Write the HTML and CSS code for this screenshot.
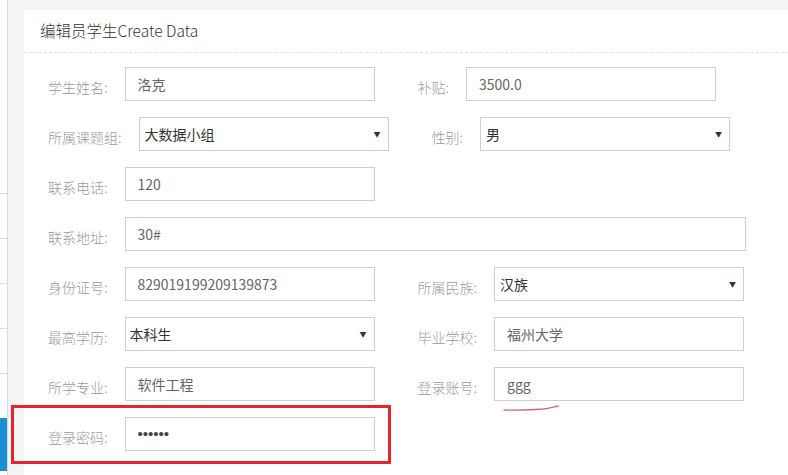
FILE: index.html
```html
<!DOCTYPE html>
<html lang="zh-CN">
<head>
<meta charset="utf-8">
<title>编辑员学生</title>
<link rel="stylesheet" href="styles.css">
</head>
<body>
<div class="page">
  <aside class="sidebar">
    <div class="side-top"></div>
    <div class="side-item"></div>
    <div class="side-item"></div>
    <div class="side-item"></div>
    <div class="side-item"></div>
    <div class="side-item"></div>
    <div class="side-item active"></div>
  </aside>
  <main class="panel">
    <div class="panel-head">编辑员学生Create Data</div>
    <form class="form">
      <div class="row">
        <div class="group"><span class="label">学生姓名:</span><div class="field">洛克</div></div>
        <div class="group"><span class="label">补贴:</span><div class="field">3500.0</div></div>
      </div>
      <div class="row">
        <div class="group"><span class="label">所属课题组:</span><div class="field select">大数据小组<span class="arrow">▼</span></div></div>
        <div class="group"><span class="label">性别:</span><div class="field select">男<span class="arrow">▼</span></div></div>
      </div>
      <div class="row">
        <div class="group"><span class="label">联系电话:</span><div class="field">120</div></div>
      </div>
      <div class="row">
        <div class="group"><span class="label">联系地址:</span><div class="field wide">30#</div></div>
      </div>
      <div class="row">
        <div class="group"><span class="label">身份证号:</span><div class="field">829019199209139873</div></div>
        <div class="group"><span class="label">所属民族:</span><div class="field select">汉族<span class="arrow">▼</span></div></div>
      </div>
      <div class="row">
        <div class="group"><span class="label">最高学历:</span><div class="field select tight">本科生<span class="arrow">▼</span></div></div>
        <div class="group"><span class="label">毕业学校:</span><div class="field">福州大学</div></div>
      </div>
      <div class="row">
        <div class="group"><span class="label">所学专业:</span><div class="field">软件工程</div></div>
        <div class="group"><span class="label">登录账号:</span><div class="field">ggg</div></div>
      </div>
      <div class="row">
        <div class="group"><span class="label">登录密码:</span><div class="field pwd">••••••</div></div>
      </div>
    </form>
  </main>
  <div class="mark-box"></div>
  <svg class="mark-line" width="56" height="8" viewBox="0 0 56 8"><path d="M1 6 C 15 6.5, 30 5.5, 40 5 C 46 4.5, 50 3, 55 2" fill="none" stroke="#d46a73" stroke-width="1.4" stroke-linecap="round"/></svg>
</div>
</body>
</html>
```
FILE: styles.css
```css
html, body {
  margin: 0;
  padding: 0;
  background: #f4f4f4;
  overflow: hidden;
}
body {
  font-family: "Noto Sans CJK SC", "Noto Sans", sans-serif;
  font-size: 14px;
  color: #333;
}
.page {
  position: relative;
  display: flex;
  width: 788px;
  height: 475px;
  overflow: hidden;
}
.sidebar {
  flex: 0 0 7px;
  background: #fff;
  border-right: 1px solid #c6e3e8;
  display: flex;
  flex-direction: column;
}
.side-top {
  height: 193px;
}
.side-item {
  height: 44px;
  border-top: 1px solid #d8e0e3;
}
.side-item.active {
  height: 53px;
  background: #1b8fd2;
  border-top: 0;
}
.panel {
  flex: 0 0 820px;
  margin-left: 16px;
  margin-top: 10px;
  background: #fff;
}
.panel-head {
  height: 42px;
  line-height: 40px;
  padding-left: 16px;
  font-size: 15.5px;
  font-weight: 300;
  color: #333;
  border-bottom: 1px dashed #e2e2e2;
}
.form {
  padding: 14px 0 0 24px;
}
.row {
  display: flex;
  align-items: center;
  gap: 43px;
  height: 34px;
  margin-bottom: 16px;
}
.group {
  display: flex;
  align-items: center;
}
.label {
  color: #9a9a9a;
  font-weight: 300;
  margin-right: 16px;
  padding-top: 6px;
  padding-right: 1px;
  line-height: 20px;
}
.field {
  position: relative;
  box-sizing: border-box;
  width: 250px;
  height: 34px;
  line-height: 32px;
  border: 1px solid #cfcfcf;
  padding: 0 12px;
  color: #666;
  white-space: nowrap;
}
.field.wide {
  width: 621px;
}
.field.select {
  padding-left: 5px;
  color: #333;
}
.field.tight {
  padding-left: 4px;
}
.arrow {
  position: absolute;
  right: 7px;
  top: 0;
  font-size: 7px;
  color: #333;
}
.field.pwd {
  font-family: "Liberation Sans", sans-serif;
  font-size: 15px;
  color: #444;
}
.mark-box {
  position: absolute;
  left: 11px;
  top: 405px;
  width: 374px;
  height: 53px;
  border: 3px solid #e3262d;
}
.mark-line {
  position: absolute;
  left: 503px;
  top: 404px;
}
```
